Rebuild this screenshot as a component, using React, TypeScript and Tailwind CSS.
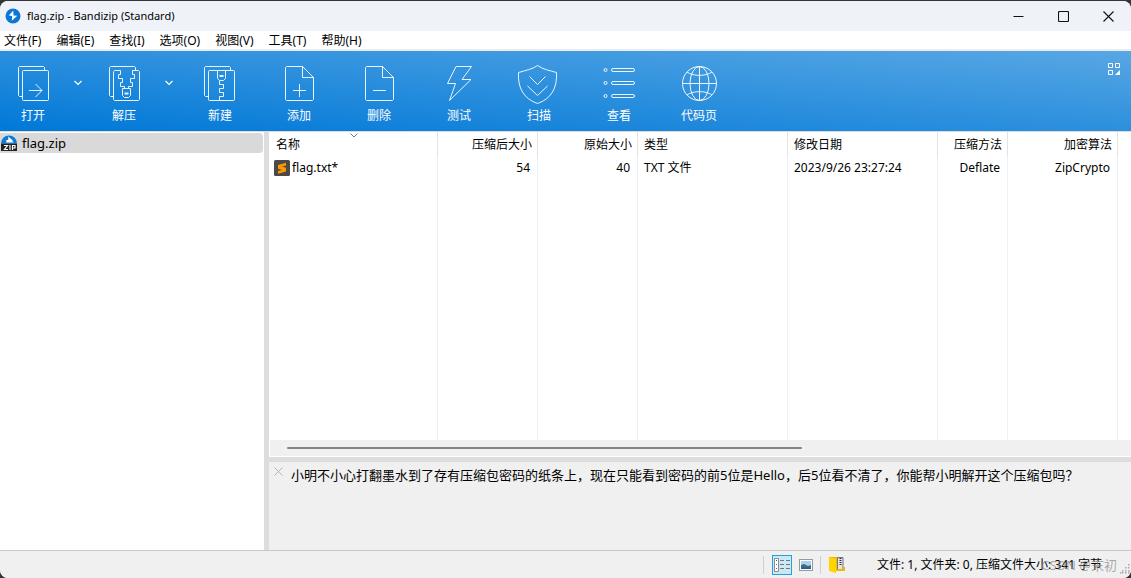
import type { ReactNode } from 'react';
import { clsx } from 'clsx';

const menus = ['文件(F)', '编辑(E)', '查找(I)', '选项(O)', '视图(V)', '工具(T)', '帮助(H)'];

type Column = { label: string; value: string; width: string; right?: boolean; sorted?: boolean };

const columns: Column[] = [
    { label: '名称', value: 'flag.txt*', width: 'w-[168px]', sorted: true },
    { label: '压缩后大小', value: '54', width: 'w-[100px]', right: true },
    { label: '原始大小', value: '40', width: 'w-[100px]', right: true },
    { label: '类型', value: 'TXT 文件', width: 'w-[150px]' },
    { label: '修改日期', value: '2023/9/26 23:27:24', width: 'w-[150px]' },
    { label: '压缩方法', value: 'Deflate', width: 'w-[70px]', right: true },
    { label: '加密算法', value: 'ZipCrypto', width: 'w-[110px]', right: true },
];

export default function App() {
    return (
        <div lang="zh-CN" className="h-screen bg-[#353535] pt-px font-['Noto_Sans','Noto_Sans_CJK_SC',sans-serif] text-xs text-black">
            <div className="flex h-full flex-col overflow-hidden rounded-lg bg-[#f0f0f0]">
                <TitleBar />
                <nav className="flex h-5 shrink-0 items-end gap-[15px] border-b-2 border-[#ececec] bg-white pl-1">
                    {menus.map(m => <button key={m} className="leading-4">{m}</button>)}
                </nav>
                <Toolbar />
                <div className="flex min-h-0 flex-1 border-t border-[#dcdcdc]">
                    <aside className="w-[264px] shrink-0 bg-white pt-px">
                        <button className="flex h-5 w-[263px] items-center gap-[5px] rounded-r-sm bg-[#d9d9d9] pl-px text-[13px] leading-5">
                            <ZipIcon />
                            flag.zip
                        </button>
                    </aside>
                    <div className="w-[5px] shrink-0 bg-[#dddddd]" />
                    <main className="flex min-w-0 flex-1 flex-col">
                        <FileTable />
                        <div className="flex h-[17px] shrink-0 items-center border-b border-l border-white bg-[#f0f0f0] pl-[17px]">
                            <div className="h-0.5 w-[61%] rounded-full bg-[#858585]" />
                        </div>
                        <div className="h-[5px] shrink-0 bg-[#dddddd]" />
                        <section className="flex h-[88px] shrink-0 gap-2 bg-[#f0f0f0] pl-[5px] pt-1">
                            <button aria-label="关闭" className="mt-px h-[9px]">
                                <svg width="9" height="9" stroke="#b4b4b4" fill="none">
                                    <path d="M.5.5l8 8M8.5.5l-8 8" />
                                </svg>
                            </button>
                            <p className="text-[13px] leading-[18px]">
                                小明不小心打翻墨水到了存有压缩包密码的纸条上，现在只能看到密码的前5位是Hello，后5位看不清了，你能帮小明解开这个压缩包吗？
                            </p>
                        </section>
                    </main>
                </div>
                <StatusBar />
            </div>
        </div>
    );
}

function TitleBar() {
    return (
        <header className="flex h-[30px] shrink-0 items-center bg-[#eff3f9] pl-[5px]">
            <svg width="16" height="16" viewBox="0 0 16 16">
                <circle cx="8" cy="8" r="7.5" fill="#0b76d6" />
                <path d="M8.3 2.5L3.8 7.6l3.3.3-.3 4.9 5.5-5-3.8-.4z" fill="#fff" />
            </svg>
            <h1 className="ml-1.5 flex-1 text-[11px]">flag.zip - Bandizip (Standard)</h1>
            <WindowButton label="最小化"><path d="M.5 5.5h10" /></WindowButton>
            <WindowButton label="最大化"><rect x=".5" y=".5" width="10" height="10" rx="1" /></WindowButton>
            <WindowButton label="关闭"><path d="M.5.5l10 10M10.5.5l-10 10" /></WindowButton>
        </header>
    );
}

function WindowButton({ label, children }: { label: string; children: ReactNode }) {
    return (
        <button aria-label={label} className="flex h-full w-[45px] items-center justify-center">
            <svg width="11" height="11" fill="none" stroke="#111" strokeWidth="1.1">{children}</svg>
        </button>
    );
}

function Toolbar() {
    return (
        <div className="flex h-20 shrink-0 items-start bg-linear-to-tr/srgb from-[#0078d7] to-[#58a7e4]">
            <div className="flex gap-px">
                <ToolButton label="打开" width="w-[66px]" menu>
                    <path d="M9.5 32.5h-3l-1-1v-28l1-1h24l1 1v3" />
                    <rect x="9.5" y="6.5" width="26" height="30" rx="1" />
                    <path d="M16 26.5h13M22.5 20l6.5 6.5-6.5 6.5" />
                </ToolButton>
                <ToolButton label="解压" width="w-[66px]" menu>
                    <path d="M9.5 32.5h-3l-1-1v-28l1-1h24l1 1v3" />
                    <path d="M16.5 6.5h-6l-1 1v28l1 1h24l1-1v-28l-1-1h-6" />
                    <path d="M16.5 6.5v4h-2v4h4v4h-2v4h4v2M28.5 6.5v4h2v4h-4v4h2v4h-4v2" />
                    <path d="M18.5 24.5h8v7l-2 2h-4l-2-2z" />
                    <path d="M20.5 29.5h4" strokeWidth="2" />
                </ToolButton>
            </div>
            <ToolButton label="新建" width="w-[78px]">
                <path d="M8.5 32.5h-3l-1-1v-28l1-1h24l1 1v3" />
                <rect x="8.5" y="6.5" width="26" height="30" rx="1" />
                <path d="M17.5 6.5v8l2 2h4l2-2v-8" />
                <path d="M19.5 12h4" strokeWidth="2" />
                <path d="M19.5 17v3.5h4v4h-4v4h4v4h-4v4" />
            </ToolButton>
            <ToolButton label="添加">
                <PageShape />
                <path d="M20.5 20v13M14 26.5h13" />
            </ToolButton>
            <ToolButton label="删除">
                <PageShape />
                <path d="M14 26.5h13" />
            </ToolButton>
            <ToolButton label="测试">
                <path d="M17 2.5L8.5 19.5h8l-6 17L32 15.5h-9l9.5-13z" />
            </ToolButton>
            <ToolButton label="扫描">
                <path d="M18.5 1.5C24 5.5 31 6.5 37.5 8.5C38.5 24 32 35 18.5 39.5C5 35-1.5 24-.5 8.5C6 6.5 13 5.5 18.5 1.5z" />
                <path d="M10.5 12.5l8 8 8-8M8.5 22l10 9.5 10-9.5" />
            </ToolButton>
            <ToolButton label="查看">
                {[4.5, 17.5, 30.5].map(y => (
                    <g key={y}>
                        <circle cx="6.5" cy={y + 1.5} r="1.5" />
                        <rect x="12.5" y={y} width="23" height="3" rx="1.5" />
                    </g>
                ))}
            </ToolButton>
            <ToolButton label="代码页">
                <circle cx="20.5" cy="19.5" r="17" />
                <ellipse cx="20.5" cy="19.5" rx="9.5" ry="17" />
                <path d="M20.5 2.5v34M3.5 19.5h34M8 8c6 4.500 19 4.500 25 0M8 31c6-4.500 19-4.500 25 0" />
            </ToolButton>
            <button aria-label="自定义" className="ml-auto mr-[11px] mt-3">
                <svg width="12" height="12" fill="none" stroke="#fff">
                    <path d="M.5.5h4v4h-4zM7.5.5h4v4h-4zM.5 7.5h4v4h-4z" />
                    <path d="M12 7v5H7z" fill="#fff" stroke="none" />
                </svg>
            </button>
        </div>
    );
}

function PageShape() {
    return (
        <path d="M23.5 2.5h-16l-1 1v32l1 1h26l1-1v-22zv11h11" />
    );
}

type ToolButtonProps = { label: string; width?: string; menu?: boolean; children: ReactNode };

function ToolButton({ label, width = 'w-20', menu, children }: ToolButtonProps) {
    return (
        <div className="flex pt-[13px]">
            <button className={clsx('flex flex-col items-center gap-[3px] leading-[18px] text-white', width)}>
                <svg width="40" height="40" fill="none" stroke="#fff" strokeOpacity="0.9" className="overflow-visible">{children}</svg>
                {label}
            </button>
            {menu && (
                <button aria-label={`${label}选项`} className="flex h-[38px] w-6 items-center justify-center">
                    <svg width="8" height="6" fill="none" stroke="#fff" strokeWidth="1.2"><path d="M.5 1L4 4.5 7.5 1" /></svg>
                </button>
            )}
        </div>
    );
}

function FileTable() {
    return (
        <div className="min-h-0 flex-1 overflow-hidden bg-white pl-px">
            <table className="h-full w-full table-fixed border-separate border-spacing-0">
                <thead>
                    <tr className="h-[25px]">
                        {columns.map(c => (
                            <th
                                key={c.label}
                                className={clsx(
                                    'relative whitespace-nowrap border-r border-[#e3e3e3] p-0 font-normal leading-[18px]',
                                    c.width,
                                    c.right ? 'pr-[5px] text-right' : 'pl-1.5 text-left'
                                )}
                            >
                                {c.label}
                                {c.sorted && (
                                    <svg width="8" height="5" fill="none" stroke="#777" className="absolute left-1/2 top-px -translate-x-1/2">
                                        <path d="M.5.5L4 4 7.5.5" />
                                    </svg>
                                )}
                            </th>
                        ))}
                        <th className="p-0" />
                    </tr>
                </thead>
                <tbody>
                    <tr className="h-[22px]">
                        {columns.map(c => (
                            <td
                                key={c.label}
                                className={clsx(
                                    'whitespace-nowrap border-r border-[#e9f1fa] p-0 leading-[18px]',
                                    c.right ? 'pr-[7px] text-right' : c.sorted ? 'pl-1' : 'pl-1.5'
                                )}
                            >
                                {c.sorted ? (
                                    <span className="flex items-center gap-0.5">
                                        <TextFileIcon />
                                        {c.value}
                                    </span>
                                ) : c.value}
                            </td>
                        ))}
                        <td className="p-0" />
                    </tr>
                    {/* filler so the column lines reach the bottom */}
                    <tr>
                        {columns.map(c => <td key={c.label} className="border-r border-[#e9f1fa] p-0" />)}
                        <td className="p-0" />
                    </tr>
                </tbody>
            </table>
        </div>
    );
}

function TextFileIcon() {
    return (
        <svg width="16" height="16" viewBox="0 0 16 16" className="shrink-0">
            <rect width="16" height="16" rx="1.5" fill="#4a4a4a" />
            <path d="M12 2.8L4 5v3.700l4 1.200-4 1.100v2.800l8-2.300V7.800L8 6.600l4-1.100z" fill="#ff9800" />
        </svg>
    );
}

function ZipIcon() {
    return (
        <svg width="16" height="16" viewBox="0 0 16 16" className="shrink-0">
            <path d="M0 8.5a8 8 0 0 1 16 0z" fill="#0b7bd8" />
            <path d="M7 1.5l5 4-1 .5 2 1.500H4.500L6 6H4l3.500-1.500z" fill="#fff" />
            <rect y="8.5" width="16" height="7.5" fill="#222" />
            <path d="M3 10.500h3.500L3.500 14.500H7M9 10v5M11.500 15v-4.500h2.500v2.500h-2.500" fill="none" stroke="#fff" strokeWidth="1.2" />
        </svg>
    );
}

function StatusBar() {
    return (
        <footer className="relative flex h-7 shrink-0 items-center justify-end border-t border-[#c8c8c8] bg-[#f0f0f0]">
            <div className="h-[18px] w-px bg-[#cfcfcf]" />
            <button aria-label="详细信息" className="ml-2 flex h-5 w-5 items-center justify-center border border-[#26a0da] bg-[#cbe8f6]">
                <svg width="16" height="14" fill="none">
                    <path d="M.5.5h4v13h-4z" fill="#fff" stroke="#8c8c8c" />
                    <path d="M6 2.5h4M12 2.5h4M6 6.5h4M12 6.5h4M6 10.5h4M12 10.5h4" stroke="#777" />
                    <path d="M2 2.5h1" stroke="#555" />
                    <path d="M2 6.5h1" stroke="#2f6fe0" />
                    <path d="M2 10.5h1" stroke="#e03030" />
                </svg>
            </button>
            <button aria-label="缩略图" className="ml-[7px]">
                <svg width="14" height="12">
                    <rect x=".5" y=".5" width="13" height="11" fill="#fff" stroke="#999" />
                    <rect x="2" y="2" width="10" height="8" fill="#a9cff5" />
                    <path d="M2 6l3-1 4 2 3-1v3H2z" fill="#3f6f73" />
                    <path d="M2 8.5h10V10H2z" fill="#2458ad" />
                </svg>
            </button>
            <div className="ml-[7px] h-[18px] w-px bg-[#cfcfcf]" />
            <svg width="16" height="17" viewBox="0 0 16 17" className="ml-2">
                <path d="M0 1h13v14H0z" fill="#f2b705" />
                <path d="M8.5 1.5h5.5v12H8.5z" fill="#e4e4e4" stroke="#777" />
                <path d="M11.5 2v8" stroke="#333" strokeWidth="2" strokeDasharray="1 1" />
                <path d="M0 1l7 2v14l-7-2z" fill="#ffd400" />
                <path d="M7 15h9v-4h-1.5v2H7z" fill="#f2b705" />
            </svg>
            <p className="ml-8 w-[254px] whitespace-nowrap leading-[18px]">文件: 1, 文件夹: 0, 压缩文件大小: 341 字节</p>
            <span className="absolute bottom-1 right-[14px] text-[13px] leading-[18px] text-[#888888]/70">CSDN @末初</span>
            <svg width="10" height="10" fill="#a8a8a8" className="absolute bottom-1 right-px">
                {[[8, 0], [5, 3], [8, 3], [2, 6], [5, 6], [8, 6], [0, 8], [2, 8], [5, 8], [8, 8]].map(([x, y]) => (
                    <rect key={`${x}-${y}`} x={x} y={y} width="1.5" height="1.5" />
                ))}
            </svg>
        </footer>
    );
}
